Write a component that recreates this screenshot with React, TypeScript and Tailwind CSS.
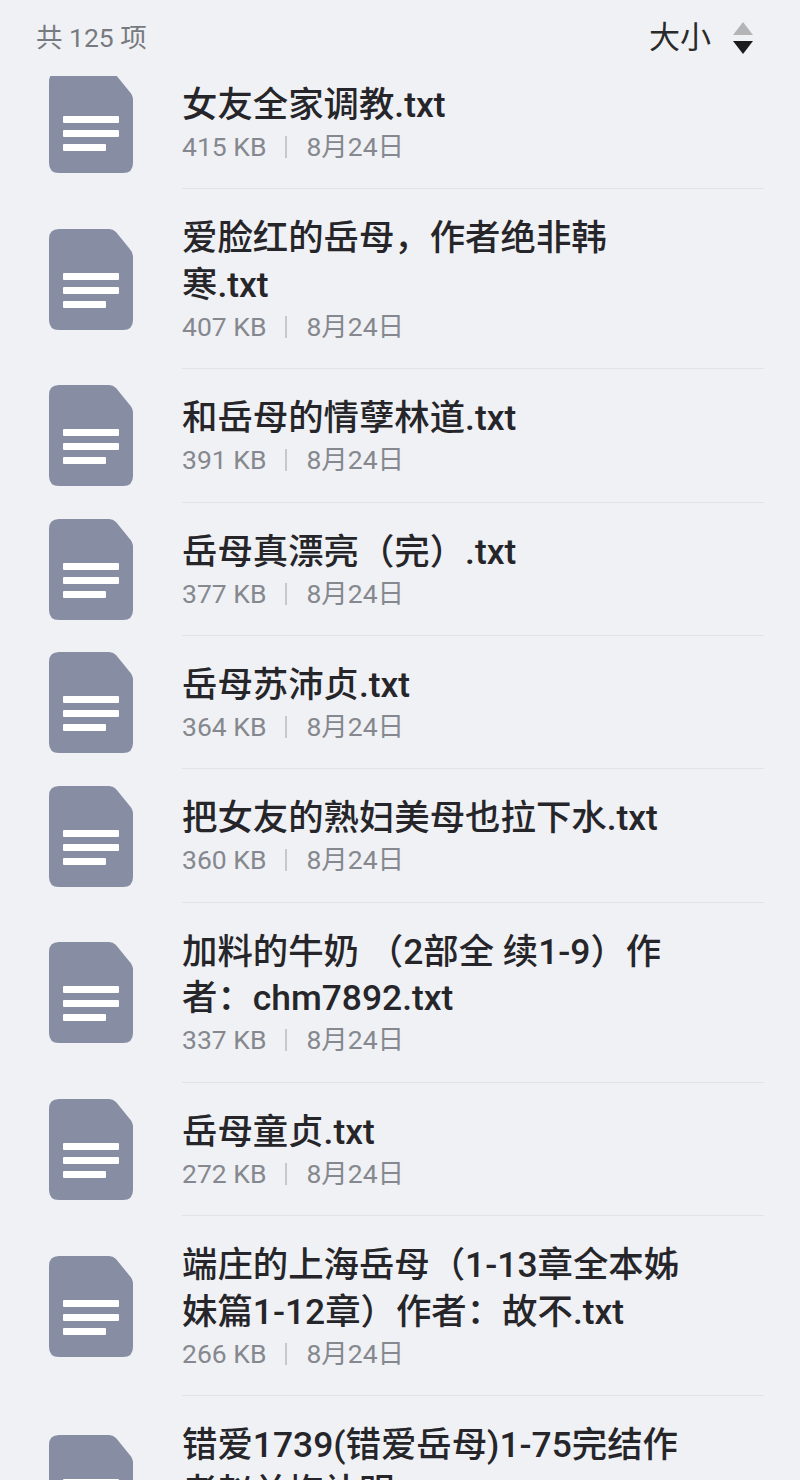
const files = [
  { name: "女友全家调教.txt", size: "415 KB" },
  { name: "爱脸红的岳母，作者绝非韩寒.txt", size: "407 KB" },
  { name: "和岳母的情孽林道.txt", size: "391 KB" },
  { name: "岳母真漂亮（完）.txt", size: "377 KB" },
  { name: "岳母苏沛贞.txt", size: "364 KB" },
  { name: "把女友的熟妇美母也拉下水.txt", size: "360 KB" },
  { name: "加料的牛奶 （2部全 续1-9）作者：chm7892.txt", size: "337 KB" },
  { name: "岳母童贞.txt", size: "272 KB" },
  { name: "端庄的上海岳母（1-13章全本姊妹篇1-12章）作者：故不.txt", size: "266 KB" },
  { name: "错爱1739(错爱岳母)1-75完结作者赵兰梅补明.txt", size: "" },
];

function FileIcon() {
  return (
    <svg width="84" height="101" viewBox="0 0 84 101" className="shrink-0">
      <path
        d="M10 0H60Q64 0 67 3L80 19Q84 23 84 28V91Q84 101 74 101H10Q0 101 0 91V10Q0 0 10 0Z"
        fill="#878da3"
      />
      <rect x="14" y="44" width="56" height="7" rx="1" fill="#fff" />
      <rect x="14" y="58" width="56" height="7" rx="1" fill="#fff" />
      <rect x="14" y="72" width="43" height="7" rx="1" fill="#fff" />
    </svg>
  );
}

function SortIcon() {
  return (
    <svg width="20" height="32" viewBox="0 0 20 32">
      <path d="M10 0L20 13H0Z" fill="#b4b4b6" />
      <path d="M0 19H20L10 32Z" fill="#1c1c1c" />
    </svg>
  );
}

export default function App() {
  return (
    <div
      className="flex h-[1480px] w-[800px] flex-col overflow-hidden bg-[#f0f1f4]"
      style={{ fontFamily: 'Roboto, "Noto Sans CJK SC", sans-serif' }}
    >
      <header className="flex h-[76px] shrink-0 items-center justify-between pl-[36px] pr-[47px]">
        <span className="text-[26.5px] text-[#777a7f]">共 125 项</span>
        <div className="flex items-center gap-[22px]">
          <span className="text-[31px] text-[#2a2a2a]">大小</span>
          <SortIcon />
        </div>
      </header>
      <div className="min-h-0 flex-1 overflow-hidden">
        <ul className="-mt-[20px]">
          {files.map((file) => (
            <li key={file.name} className="flex items-center gap-[49px] pl-[49px]">
              <FileIcon />
              <div className="mr-[36px] flex flex-1 flex-col border-b border-[#e2e3e6] pt-[26px] pb-[25.4px]">
                <span className="pr-[74px] text-[35.4px] leading-[46.5px] font-medium text-[#26262a]">
                  {file.name}
                </span>
                <div className="mt-[2.5px] flex items-center text-[26.5px] leading-[32px] text-[#85888e]">
                  <span>{file.size}</span>
                  <span className="mx-[19px] h-[22px] w-[2px] bg-[#c6c8cc]" />
                  <span>8月24日</span>
                </div>
              </div>
            </li>
          ))}
        </ul>
      </div>
    </div>
  );
}
